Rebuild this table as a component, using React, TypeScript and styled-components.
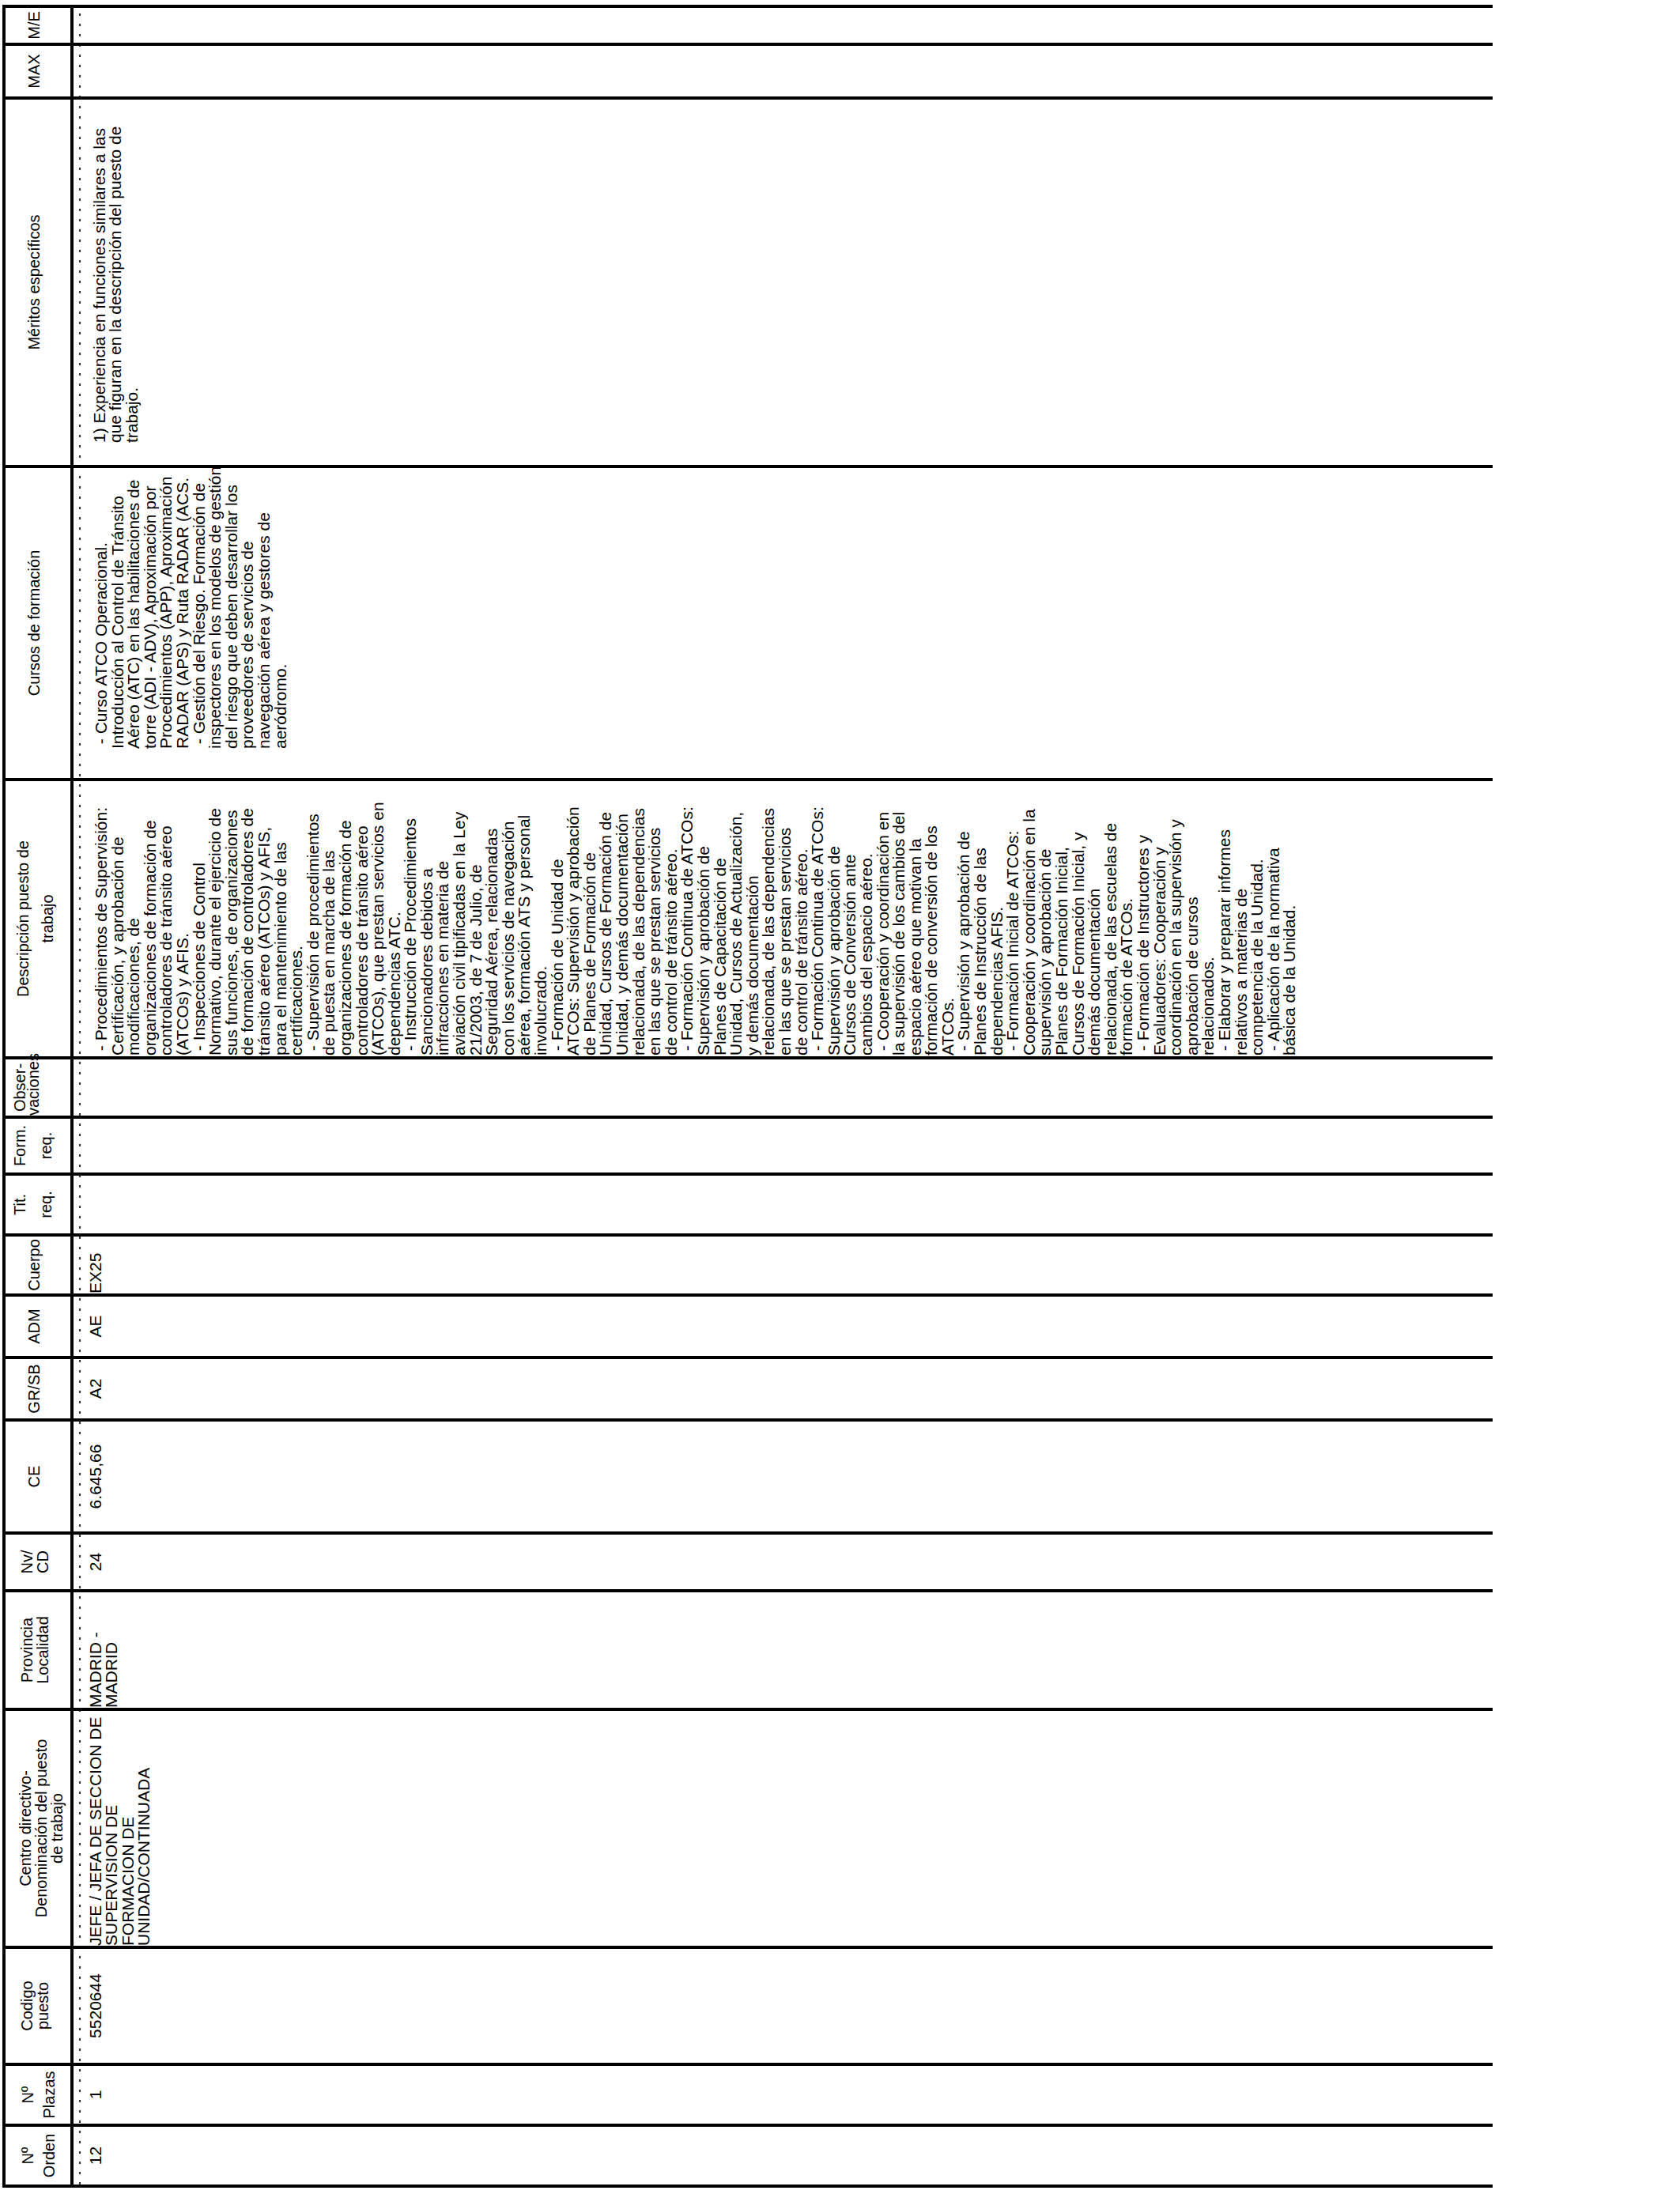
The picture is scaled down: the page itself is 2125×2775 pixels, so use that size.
import React from 'react';
import styled, { createGlobalStyle } from 'styled-components';

const GlobalStyle = createGlobalStyle`
  html, body {
    margin: 0;
    padding: 0;
    background: #fff;
  }
  body {
    font-family: "Liberation Sans", Arial, sans-serif;
    color: #000;
  }
`;

// widths of the columns of the landscape table, left to right (border included)
const colWidths = [77, 77, 148, 301, 150, 73, 143, 79, 79, 76, 77, 72, 75, 352, 396, 466, 68, 48];

const Page = styled.div`
  width: 2125px;
  height: 2775px;
  overflow: hidden;
  background: #fff;
`;

// the printed sheet is landscape and turned a quarter to the left
const Sheet = styled.div`
  width: 2775px;
  height: 2125px;
  box-sizing: border-box;
  padding: 3px 0 0 8px;
  transform-origin: 0 0;
  transform: translateY(2775px) rotate(-90deg);
`;

const Table = styled.div`
  display: grid;
  grid-template-columns: ${colWidths.map(w => `${w}px`).join(' ')};
  grid-template-rows: 86px 1795px;
  width: max-content;
  border-top: 4px solid #000;
  border-left: 4px solid #000;
  background-image: repeating-linear-gradient(to right, #333 0 3px, transparent 3px 13px);
  background-size: 100% 2px;
  background-position: 0 93px;
  background-repeat: no-repeat;
`;

const Head = styled.div<{ $lh?: number; $pt?: number }>`
  box-sizing: border-box;
  border-right: 4px solid #000;
  border-bottom: 4px solid #000;
  padding-top: ${p => p.$pt ?? 26}px;
  font-size: 20px;
  line-height: ${p => p.$lh ?? 20}px;
  text-align: center;
  white-space: nowrap;
`;

const Cell = styled.div<{ $center?: boolean; $pt?: number; $pl?: number }>`
  box-sizing: border-box;
  border-right: 4px solid #000;
  padding-top: ${p => p.$pt ?? 17.5}px;
  padding-left: ${p => p.$pl ?? 0}px;
  font-size: 21px;
  line-height: 20.6px;
  text-align: ${p => (p.$center ? 'center' : 'left')};
  white-space: pre;
`;

const Line = styled.div``;

const denominacion = [
  'JEFE / JEFA DE SECCION DE',
  'SUPERVISION DE',
  'FORMACION DE',
  'UNIDAD/CONTINUADA',
];

const descripcion = [
  ' - Procedimientos de Supervisión:',
  'Certificación, y aprobación de',
  'modificaciones, de',
  'organizaciones de formación de',
  'controladores de tránsito aéreo',
  '(ATCOs) y AFIS.',
  ' - Inspecciones de Control',
  'Normativo, durante el ejercicio de',
  'sus funciones, de organizaciones',
  'de formación de controladores de',
  'tránsito aéreo (ATCOs) y AFIS,',
  'para el mantenimiento de las',
  'certificaciones.',
  ' - Supervisión de procedimientos',
  'de puesta en marcha de las',
  'organizaciones de formación de',
  'controladores de tránsito aéreo',
  '(ATCOs), que prestan servicios en',
  'dependencias ATC.',
  ' - Instrucción de Procedimientos',
  'Sancionadores debidos a',
  'infracciones en materia de',
  'aviación civil tipificadas en la Ley',
  '21/2003, de 7 de Julio, de',
  'Seguridad Aérea, relacionadas',
  'con los servicios de navegación',
  'aérea, formación ATS y personal',
  'involucrado.',
  ' - Formación de Unidad de',
  'ATCOs: Supervisión y aprobación',
  'de Planes de Formación de',
  'Unidad, Cursos de Formación de',
  'Unidad, y demás documentación',
  'relacionada, de las dependencias',
  'en las que se prestan servicios',
  'de control de tránsito aéreo.',
  ' - Formación Continua de ATCOs:',
  'Supervisión y aprobación de',
  'Planes de Capacitación de',
  'Unidad, Cursos de Actualización,',
  'y demás documentación',
  'relacionada, de las dependencias',
  'en las que se prestan servicios',
  'de control de tránsito aéreo.',
  ' - Formación Continua de ATCOs:',
  'Supervisión y aprobación de',
  'Cursos de Conversión ante',
  'cambios del espacio aéreo.',
  ' - Cooperación y coordinación en',
  'la supervisión de los cambios del',
  'espacio aéreo que motivan la',
  'formación de conversión de los',
  'ATCOs.',
  ' - Supervisión y aprobación de',
  'Planes de Instrucción de las',
  'dependencias AFIS.',
  ' - Formación Inicial de ATCOs:',
  'Cooperación y coordinación en la',
  'supervisión y aprobación de',
  'Planes de Formación Inicial,',
  'Cursos de Formación Inicial, y',
  'demás documentación',
  'relacionada, de las escuelas de',
  'formación de ATCOs.',
  ' - Formación de Instructores y',
  'Evaluadores: Cooperación y',
  'coordinación en la supervisión y',
  'aprobación de cursos',
  'relacionados.',
  ' - Elaborar y preparar informes',
  'relativos a materias de',
  'competencia de la Unidad.',
  ' - Aplicación de la normativa',
  'básica de la Unidad.',
];

const cursos = [
  ' - Curso ATCO Operacional.',
  'Introducción al Control de Tránsito',
  'Aéreo (ATC) en las habilitaciones de',
  'torre (ADI - ADV), Aproximación por',
  'Procedimientos (APP), Aproximación',
  'RADAR (APS) y Ruta RADAR (ACS.',
  ' - Gestión del Riesgo. Formación de',
  'inspectores en los modelos de gestión',
  'del riesgo que deben desarrollar los',
  'proveedores de servicios de',
  'navegación aérea y gestores de',
  'aeródromo.',
];

const meritos = [
  '1) Experiencia en funciones similares a las',
  'que figuran en la descripción del puesto de',
  'trabajo.',
];

const lines = (list: string[]) => list.map((t, i) => <Line key={i}>{t}</Line>);

const App: React.FC = () => {
  return (
    <Page>
      <GlobalStyle />
      <Sheet>
        <Table>
          <Head $pt={15} $lh={27}>Nº<br />Orden</Head>
          <Head $pt={15} $lh={27}>Nº<br />Plazas</Head>
          <Head $pt={17}>Codigo<br />puesto</Head>
          <Head $pt={15}>Centro directivo-<br />Denominación del puesto<br />de trabajo</Head>
          <Head $pt={17}>Provincia<br />Localidad</Head>
          <Head $pt={17}>Nv/<br />CD</Head>
          <Head>CE</Head>
          <Head>GR/SB</Head>
          <Head>ADM</Head>
          <Head>Cuerpo</Head>
          <Head $pt={2} $lh={33}>Tit.<br />req.</Head>
          <Head $pt={2} $lh={33}>Form.<br />req.</Head>
          <Head $pt={10} $lh={17}>Obser-<br />vaciones</Head>
          <Head $pt={7} $lh={31}>Descripción puesto de<br />trabajo</Head>
          <Head>Cursos de formación</Head>
          <Head>Méritos específicos</Head>
          <Head>MAX</Head>
          <Head>M/E</Head>

          <Cell $center>12</Cell>
          <Cell $center>1</Cell>
          <Cell $center>5520644</Cell>
          <Cell>{lines(denominacion)}</Cell>
          <Cell>{lines(['MADRID -', 'MADRID'])}</Cell>
          <Cell $center>24</Cell>
          <Cell $center>6.645,66</Cell>
          <Cell $center>A2</Cell>
          <Cell $center>AE</Cell>
          <Cell>EX25</Cell>
          <Cell />
          <Cell />
          <Cell />
          <Cell $pt={25} $pl={1}>{lines(descripcion)}</Cell>
          <Cell $pt={25} $pl={37}>{lines(cursos)}</Cell>
          <Cell $pt={22.5} $pl={28}>{lines(meritos)}</Cell>
          <Cell />
          <Cell />
        </Table>
      </Sheet>
    </Page>
  );
};

export default App;
